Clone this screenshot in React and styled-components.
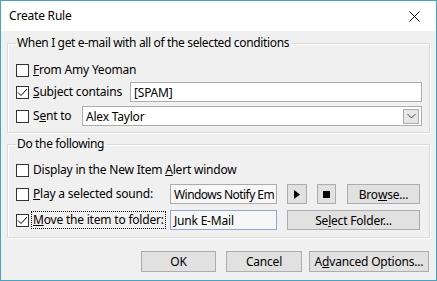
import React from "react";
import styled, { createGlobalStyle } from "styled-components";

const Global = createGlobalStyle`
  html, body { margin: 0; padding: 0; background: #f0f0f0; }
  body { font-family: "Noto Sans", "Open Sans", sans-serif; font-size: 12px; color: #000; }
  * { box-sizing: border-box; }
`;

const Window = styled.div`
  width: 437px;
  height: 281px;
  border: 1px solid #4aa2c2;
  background: #f0f0f0;
  display: flex;
  flex-direction: column;
  overflow: hidden;
`;

const TitleBar = styled.div`
  height: 30px;
  background: #fff;
  display: flex;
  align-items: center;
  justify-content: space-between;
  padding-left: 8px;
  flex: none;
`;

const Title = styled.span`
  font-size: 12px;
  letter-spacing: -0.2px;
  padding-bottom: 1px;
`;

const Close = styled.div`
  width: 46px;
  height: 30px;
  display: flex;
  align-items: center;
  justify-content: center;
  margin-right: -1px;
`;

const Body = styled.div`
  flex: 1;
  padding: 4px 6px 8px 6px;
  display: flex;
  flex-direction: column;
`;

const Group = styled.fieldset`
  margin: 0 0 ${(p) => p.$mb || 0}px 0;
  border: 1px solid #dcdcdc;
  box-shadow: 1px 1px 0 #fff, inset 1px 1px 0 #fff;
  padding: ${(p) => p.$pt}px 7px ${(p) => p.$pb}px 8px;
  min-width: 0;
  display: flex;
  flex-direction: column;
`;

const Legend = styled.legend`
  padding: 0 2px 0 1px;
  margin-left: 0;
  line-height: 16px;
  height: 16px;
  letter-spacing: -0.35px;
`;

const Row = styled.div`
  display: flex;
  align-items: center;
  height: 20px;
  margin-top: ${(p) => p.$mt || 0}px;
`;

const CheckLabel = styled.label`
  display: flex;
  align-items: center;
  width: ${(p) => (p.$w ? `${p.$w}px` : "auto")};
  flex: none;
  height: 20px;
`;

const Box = styled.span`
  width: 13px;
  height: 13px;
  border: 1px solid #333;
  background: #fff;
  flex: none;
  display: flex;
  align-items: center;
  justify-content: center;
  margin-right: 3px;
`;

const LabelText = styled.span`
  letter-spacing: -0.2px;
  white-space: nowrap;
  padding: 0 1px;
  line-height: 16px;
  outline: ${(p) => (p.$focus ? "1px dotted #000" : "none")};
  outline-offset: 0;
`;

const U = styled.span`
  text-decoration: underline;
`;

const TextBox = styled.div`
  height: 20px;
  width: ${(p) => (p.$w ? `${p.$w}px` : "auto")};
  flex: ${(p) => (p.$w ? "none" : "1")};
  background: ${(p) => (p.$ro ? "#f7f7f7" : "#fff")};
  border: 1px solid ${(p) => (p.$focus ? "#8fa7c9" : "#acacac")};
  display: flex;
  align-items: center;
  padding-left: 3px;
  overflow: hidden;
  white-space: nowrap;
  letter-spacing: ${(p) => (p.$tight ? "-0.55px" : "-0.2px")};
`;

const Combo = styled.div`
  flex: 1;
  height: 20px;
  background: #fff;
  border: 1px solid #acacac;
  display: flex;
  align-items: center;
  justify-content: space-between;
  padding-left: 3px;
  padding-right: 2px;
  letter-spacing: -0.2px;
`;

const ComboBtn = styled.div`
  width: 16px;
  height: 15px;
  background: #e6e6e6;
  border: 1px solid #acacac;
  display: flex;
  align-items: center;
  justify-content: center;
`;

const Button = styled.div`
  height: ${(p) => p.$h || 20}px;
  width: ${(p) => p.$w}px;
  margin-left: ${(p) => p.$ml || 0}px;
  flex: none;
  background: #e1e1e1;
  border: 1px solid #adadad;
  display: flex;
  align-items: center;
  justify-content: center;
  letter-spacing: -0.2px;
  white-space: nowrap;
`;

const Footer = styled.div`
  display: flex;
  justify-content: flex-end;
  margin-top: 13px;
  padding-right: 1px;
`;

const Check = () => (
  <svg width="11" height="11" viewBox="0 0 11 11">
    <path d="M1 5.5 L4 8.5 L10 2" fill="none" stroke="#000" strokeWidth="1" />
  </svg>
);

const CheckBox = ({ checked }) => <Box>{checked && <Check />}</Box>;

export default function App() {
  return (
    <>
      <Global />
      <Window>
        <TitleBar>
          <Title>Create Rule</Title>
          <Close>
            <svg width="11" height="11" viewBox="0 0 11 11">
              <path d="M0.5 0.5 L10.5 10.5 M10.5 0.5 L0.5 10.5" stroke="#000" strokeWidth="1" />
            </svg>
          </Close>
        </TitleBar>
        <Body>
          <Group $pt={9} $pb={6} $mb={3}>
            <Legend>When I get e-mail with all of the selected conditions</Legend>
            <Row>
              <CheckLabel>
                <CheckBox />
                <LabelText>
                  <U>F</U>rom Amy Yeoman
                </LabelText>
              </CheckLabel>
            </Row>
            <Row $mt={2}>
              <CheckLabel $w={114}>
                <CheckBox checked />
                <LabelText>
                  <U>S</U>ubject contains
                </LabelText>
              </CheckLabel>
              <TextBox>[SPAM]</TextBox>
            </Row>
            <Row $mt={4}>
              <CheckLabel $w={66}>
                <CheckBox />
                <LabelText>
                  S<U>e</U>nt to
                </LabelText>
              </CheckLabel>
              <Combo>
                <span>Alex Taylor</span>
                <ComboBtn>
                  <svg width="9" height="6" viewBox="0 0 9 6">
                    <path d="M0.5 1 L4.5 5 L8.5 1" fill="none" stroke="#444" strokeWidth="1" />
                  </svg>
                </ComboBtn>
              </Combo>
            </Row>
          </Group>
          <Group $pt={8} $pb={7}>
            <Legend>Do the following</Legend>
            <Row>
              <CheckLabel>
                <CheckBox />
                <LabelText>
                  Display in the New Item <U>A</U>lert window
                </LabelText>
              </CheckLabel>
            </Row>
            <Row $mt={4}>
              <CheckLabel $w={154}>
                <CheckBox />
                <LabelText>
                  <U>P</U>lay a selected sound:
                </LabelText>
              </CheckLabel>
              <TextBox $w={107} $ro $tight>Windows Notify Em</TextBox>
              <Button $w={20} $ml={10}>
                <svg width="6" height="9" viewBox="0 0 6 9">
                  <path d="M0 0 L6 4.5 L0 9 Z" fill="#000" />
                </svg>
              </Button>
              <Button $w={19} $ml={10}>
                <svg width="7" height="7" viewBox="0 0 7 7">
                  <rect width="7" height="7" fill="#000" />
                </svg>
              </Button>
              <Button $w={73} $ml={11}>
                Bro<U>w</U>se...
              </Button>
            </Row>
            <Row $mt={6}>
              <CheckLabel $w={154}>
                <CheckBox checked />
                <LabelText $focus>
                  <U>M</U>ove the item to folder:
                </LabelText>
              </CheckLabel>
              <TextBox $w={107} $ro $focus>Junk E-Mail</TextBox>
              <Button $w={133} $ml={10}>
                Se<U>l</U>ect Folder...
              </Button>
            </Row>
          </Group>
          <Footer>
            <Button $w={75} $h={21}>OK</Button>
            <Button $w={76} $h={21} $ml={10}>Cancel</Button>
            <Button $w={120} $h={21} $ml={7}>
              A<U>d</U>vanced Options...
            </Button>
          </Footer>
        </Body>
      </Window>
    </>
  );
}
